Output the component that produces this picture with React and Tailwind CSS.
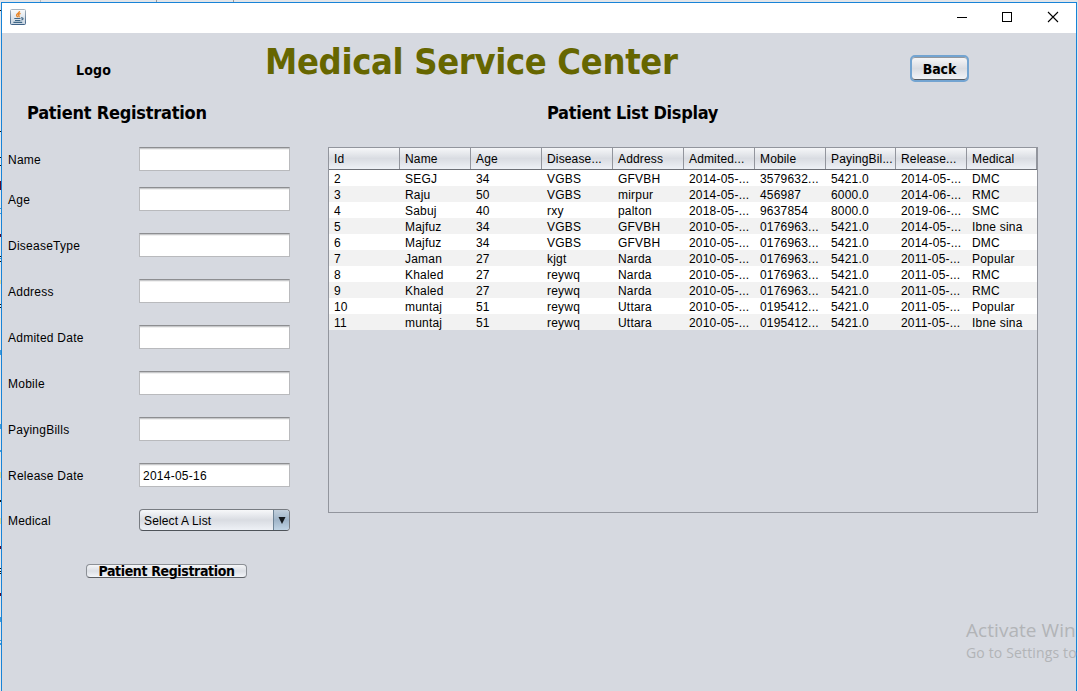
const columns = ['Id', 'Name', 'Age', 'Disease...', 'Address', 'Admited...', 'Mobile', 'PayingBil...', 'Release...', 'Medical'];

const patients = [
  ['2', 'SEGJ', '34', 'VGBS', 'GFVBH', '2014-05-...', '3579632...', '5421.0', '2014-05-...', 'DMC'],
  ['3', 'Raju', '50', 'VGBS', 'mirpur', '2014-05-...', '456987', '6000.0', '2014-06-...', 'RMC'],
  ['4', 'Sabuj', '40', 'rxy', 'palton', '2018-05-...', '9637854', '8000.0', '2019-06-...', 'SMC'],
  ['5', 'Majfuz', '34', 'VGBS', 'GFVBH', '2010-05-...', '0176963...', '5421.0', '2014-05-...', 'Ibne sina'],
  ['6', 'Majfuz', '34', 'VGBS', 'GFVBH', '2010-05-...', '0176963...', '5421.0', '2014-05-...', 'DMC'],
  ['7', 'Jaman', '27', 'kjgt', 'Narda', '2010-05-...', '0176963...', '5421.0', '2011-05-...', 'Popular'],
  ['8', 'Khaled', '27', 'reywq', 'Narda', '2010-05-...', '0176963...', '5421.0', '2011-05-...', 'RMC'],
  ['9', 'Khaled', '27', 'reywq', 'Narda', '2010-05-...', '0176963...', '5421.0', '2011-05-...', 'RMC'],
  ['10', 'muntaj', '51', 'reywq', 'Uttara', '2010-05-...', '0195412...', '5421.0', '2011-05-...', 'Popular'],
  ['11', 'muntaj', '51', 'reywq', 'Uttara', '2010-05-...', '0195412...', '5421.0', '2011-05-...', 'Ibne sina'],
];

const fields = [
  { label: 'Name', gap: 'mb-[16px]' },
  { label: 'Age', gap: 'mb-[22px]' },
  { label: 'DiseaseType', gap: 'mb-[22px]' },
  { label: 'Address', gap: 'mb-[22px]' },
  { label: 'Admited Date', gap: 'mb-[22px]' },
  { label: 'Mobile', gap: 'mb-[22px]' },
  { label: 'PayingBills', gap: 'mb-[22px]' },
  { label: 'Release Date', value: '2014-05-16', gap: 'mb-[22px]' },
];

const bold = "font-['DejaVu_Sans_Condensed','DejaVu_Sans',sans-serif] font-bold [font-stretch:condensed]";
const gridCols = 'grid grid-cols-[71px_71px_71px_71px_71px_71px_71px_70px_71px_70px]';

function JavaIcon() {
  return (
    <svg width="16" height="16" viewBox="0 0 16 16" fill="none">
      <defs>
        <linearGradient id="tile" x1="0" y1="0" x2="0" y2="1">
          <stop offset="0" stopColor="#fafbfc" />
          <stop offset="1" stopColor="#c8d4e0" />
        </linearGradient>
        <linearGradient id="edge" x1="0" y1="0" x2="0" y2="1">
          <stop offset="0" stopColor="#a9b4be" />
          <stop offset="1" stopColor="#3f6287" />
        </linearGradient>
      </defs>
      <rect x=".5" y=".5" width="15" height="15" rx="1" fill="url(#tile)" stroke="url(#edge)" />
      <path d="M9.5 2.2C9.8 4 6.5 4.6 6.6 6.3c0 .9.9 1.3 1.1 2M10.6 4.3C8.5 5 8.2 6 9 6.9c.4.5.1 1-.3 1.4" stroke="#e8862a" strokeWidth="1.4" />
      <path d="M4.3 9.5h6.2M5 11.5h5.4M11 8.9c2.8-.5 2.5 1.8.3 2.1M3.4 13.4h8.8" stroke="#3f6787" strokeWidth="1.2" />
    </svg>
  );
}

function TitleBar() {
  return (
    <div className="flex h-[30px] shrink-0 items-start justify-between bg-white">
      <div className="pt-[6px] pl-[8px]"><JavaIcon /></div>
      <svg width="104" height="12" viewBox="0 0 104 12" className="mt-[8px] mr-[15px]" fill="none" stroke="#000" shapeRendering="crispEdges">
        <path d="M0 6.5H10" />
        <rect x="45.5" y="1.5" width="9" height="9" />
        <path d="M91 1l10 10M101 1l-10 10" shapeRendering="auto" strokeWidth="1.1" />
      </svg>
    </div>
  );
}

function RegistrationForm() {
  return (
    <form className="flex w-[288px] shrink-0 flex-col">
      {fields.map((f) => (
        <div key={f.label} className={`flex h-[24px] items-center ${f.gap}`}>
          <label className="w-[131px] pt-[2px] leading-[14px] tracking-[0.25px]">{f.label}</label>
          <div className="flex h-[24px] w-[151px] items-center border border-[#b9babd] border-t-[#8d8e91] bg-white pt-px pl-[3px] leading-[14px] tracking-[0.25px] shadow-[inset_0_1px_0_#c8c9cb,inset_0_2px_0_#f0f0f0]">
            {f.value}
          </div>
        </div>
      ))}
      <div className="flex h-[22px] items-center">
        <label className="w-[131px] pt-[2px] leading-[14px]">Medical</label>
        <div className="flex h-[22px] w-[151px] overflow-hidden rounded-[4px] border border-[#777b81] border-b-[#4e5359] bg-linear-to-b from-[#f7f8fa] via-[#d9dce2] to-[#eef1f6]">
          <span className="flex-1 pt-[4px] pl-[4px] leading-[14px] tracking-[0.15px]">Select A List</span>
          <span className="flex w-[16px] items-center justify-center border-l border-[#6e8497] bg-linear-to-b from-[#c3d0dc] via-[#9fb4c8] to-[#c0d4e5]">
            <svg width="8" height="7" viewBox="0 0 8 7" className="mt-px"><path d="M.5 0h7L4 7z" fill="#15191d" /></svg>
          </span>
        </div>
      </div>
      <button type="button" className={`mt-[33px] ml-[78px] flex h-[14px] w-[161px] items-center justify-center rounded-[4px] border border-[#8c9096] border-b-[#5a5e63] bg-linear-to-b from-[#f5f6f8] via-[#dcdfe5] to-[#f3f5f9] text-[14px] leading-[14px] tracking-[-0.36px] whitespace-nowrap text-black ${bold}`}>
        Patient Registration
      </button>
    </form>
  );
}

function PatientTable() {
  return (
    <div className="h-[366px] w-[710px] shrink-0 border border-[#92959d]">
      <div className={`h-[22px] border-b border-[#6d7077] bg-linear-to-b from-[#f6f7f9] via-[#d9dce2] to-[#eef1f6] ${gridCols}`}>
        {columns.map((c) => (
          <div key={c} className="border-r border-[#92959d] pt-[4px] pl-[5px] leading-[14px] tracking-[0.15px] whitespace-nowrap">{c}</div>
        ))}
      </div>
      {patients.map((row) => (
        <div key={row[0]} className={`h-[16px] odd:bg-[#f2f2f2] even:bg-white ${gridCols}`}>
          {row.map((cell, i) => (
            <div key={i} className="pt-[2px] pl-[5px] leading-[14px] whitespace-nowrap">{cell}</div>
          ))}
        </div>
      ))}
    </div>
  );
}

// Slivers of the window that lies behind this one, seen along the left edge.
function BackgroundEdge() {
  return (
    <svg width="1" height="691" viewBox="0 0 1 691" className="shrink-0" shapeRendering="crispEdges">
      <rect width="1" height="691" fill="#e4e6ea" />
      <path d="M.5 10v1M.5 131v1M.5 157v1M.5 165v1M.5 256v1M.5 261v1M.5 304v1M.5 307v1M.5 500v2M.5 568v1M.5 571v1M.5 573v1" stroke="#111" />
      <path d="M.5 181v9M.5 234v3M.5 546v3M.5 593v3" stroke="#5a0a2c" />
      <path d="M.5 208v1M.5 213v1M.5 258v1M.5 350v5M.5 424v5M.5 450v2M.5 617v5M.5 640v1M.5 643v2" stroke="#3f9ad8" />
      <path d="M.5 280v4M.5 472v6M.5 518v6" stroke="#e5dc9a" />
    </svg>
  );
}

export default function App() {
  return (
    <div className="flex h-[691px] w-[1078px] flex-col overflow-hidden bg-[#e2e5e9] font-['Liberation_Sans',Arial,sans-serif] text-[12px] tracking-[0.2px] text-black">
      <div className="flex h-[2px] shrink-0">
        <div className="w-[41px] border-r border-[#b8bbbf]" />
        <div className="w-[116px] border-r border-[#999]" />
        <div className="w-[77px] border-r border-[#999]" />
      </div>
      <div className="flex h-[689px]">
        <div className="-mt-[2px] w-px shrink-0"><BackgroundEdge /></div>
        <div className="flex w-[1076px] shrink-0 flex-col border-x border-t border-[#1883d7] bg-[#d6d9e0]">
          <TitleBar />
          <header className="flex h-[64px] shrink-0">
            <div className={`w-[263px] pt-[28px] pl-[74px] text-[14px] leading-[18px] ${bold}`}>Logo</div>
            <h1 className={`w-[645px] pt-[7px] text-[36px] leading-[44px] tracking-[-0.34px] whitespace-nowrap text-[#666600] ${bold}`}>Medical Service Center</h1>
            <button type="button" className={`mt-[22px] h-[27px] w-[59px] rounded-[5px] border-2 border-[#73a4d1] bg-linear-to-b from-[#f8f8fa] via-[#d9dce2] to-[#f4f6fa] text-[14px] leading-[22px] tracking-[-0.1px] shadow-[inset_0_-1px_0_#555a60,inset_0_1px_0_#94979c] ${bold}`}>Back</button>
          </header>
          <div className={`flex h-[50px] shrink-0 pt-[4px] text-[18px] leading-[24px] tracking-[-0.23px] ${bold}`}>
            <h2 className="w-[520px] pl-[25px]">Patient Registration</h2>
            <h2 className="pl-[25px] tracking-[-0.3px]">Patient List Display</h2>
          </div>
          <main className="flex h-[431px] shrink-0 pl-[6px]">
            <RegistrationForm />
            <div className="ml-[32px]"><PatientTable /></div>
          </main>
          <div className="mt-[40px] ml-[964px] font-['Open_Sans','Noto_Sans',sans-serif] whitespace-nowrap text-[#b2b4b7]">
            <p className="text-[19px] leading-[25px] tracking-[0.05px]">Activate Win</p>
            <p className="text-[14px] leading-[20px] tracking-[0.15px]">Go to Settings to</p>
          </div>
        </div>
      </div>
    </div>
  );
}
